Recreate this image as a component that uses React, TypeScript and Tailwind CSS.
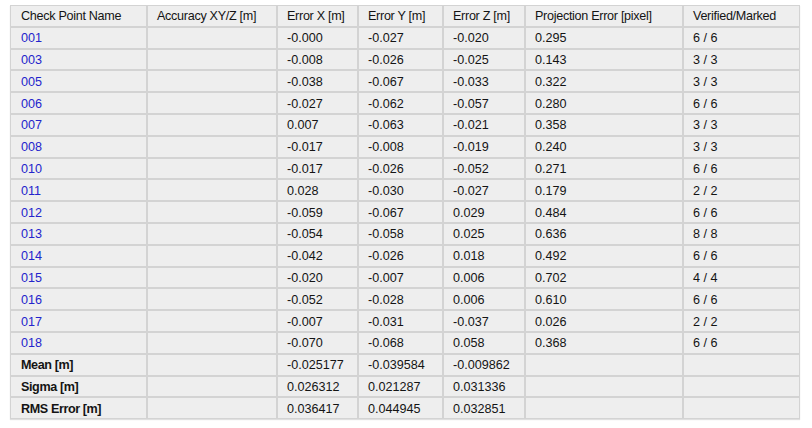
const HEADERS = [
  'Check Point Name',
  'Accuracy XY/Z [m]',
  'Error X [m]',
  'Error Y [m]',
  'Error Z [m]',
  'Projection Error [pixel]',
  'Verified/Marked',
]

const ROWS: string[][] = [
  ['001', '-0.000', '-0.027', '-0.020', '0.295', '6 / 6'],
  ['003', '-0.008', '-0.026', '-0.025', '0.143', '3 / 3'],
  ['005', '-0.038', '-0.067', '-0.033', '0.322', '3 / 3'],
  ['006', '-0.027', '-0.062', '-0.057', '0.280', '6 / 6'],
  ['007', '0.007', '-0.063', '-0.021', '0.358', '3 / 3'],
  ['008', '-0.017', '-0.008', '-0.019', '0.240', '3 / 3'],
  ['010', '-0.017', '-0.026', '-0.052', '0.271', '6 / 6'],
  ['011', '0.028', '-0.030', '-0.027', '0.179', '2 / 2'],
  ['012', '-0.059', '-0.067', '0.029', '0.484', '6 / 6'],
  ['013', '-0.054', '-0.058', '0.025', '0.636', '8 / 8'],
  ['014', '-0.042', '-0.026', '0.018', '0.492', '6 / 6'],
  ['015', '-0.020', '-0.007', '0.006', '0.702', '4 / 4'],
  ['016', '-0.052', '-0.028', '0.006', '0.610', '6 / 6'],
  ['017', '-0.007', '-0.031', '-0.037', '0.026', '2 / 2'],
  ['018', '-0.070', '-0.068', '0.058', '0.368', '6 / 6'],
]

const SUMMARY: string[][] = [
  ['Mean [m]', '-0.025177', '-0.039584', '-0.009862'],
  ['Sigma [m]', '0.026312', '0.021287', '0.031336'],
  ['RMS Error [m]', '0.036417', '0.044945', '0.032851'],
]

// grid gap on a grey background draws the cell borders
const cell = 'flex h-[19.8px] items-center bg-[#eeeeee] pt-[2px] pl-[9px] whitespace-nowrap'

export default function App() {
  return (
    <div className="h-[428px] w-[812px] bg-white pt-[5px] pl-[10px] font-['Liberation_Sans',Arial,sans-serif] text-[12.6px] text-[#141414]">
      <div className="grid w-[790px] grid-cols-[135px_128px_79px_83px_80px_156px_115px] gap-[2px] bg-[#d3d3d3] p-[1px] shadow-[0_1px_1px_rgba(0,0,0,0.12)]">
        {HEADERS.map((h, i) => (
          <div key={h} className={`${cell} ${i === 0 ? 'pl-[10px]' : ''} tracking-[-0.3px]`}>
            {h}
          </div>
        ))}

        {ROWS.map(([name, x, y, z, proj, ver]) => (
          <div key={name} className="contents">
            <div className={`${cell} pl-[10px] text-[#2424cc]`}>{name}</div>
            <div className={cell} />
            <div className={cell}>{x}</div>
            <div className={cell}>{y}</div>
            <div className={cell}>{z}</div>
            <div className={cell}>{proj}</div>
            <div className={cell}>{ver}</div>
          </div>
        ))}

        {SUMMARY.map(([label, x, y, z]) => (
          <div key={label} className="contents">
            <div className={`${cell} pl-[10px] font-bold tracking-[-0.4px]`}>{label}</div>
            <div className={cell} />
            <div className={cell}>{x}</div>
            <div className={cell}>{y}</div>
            <div className={cell}>{z}</div>
            <div className={cell} />
            <div className={cell} />
          </div>
        ))}
      </div>
    </div>
  )
}
